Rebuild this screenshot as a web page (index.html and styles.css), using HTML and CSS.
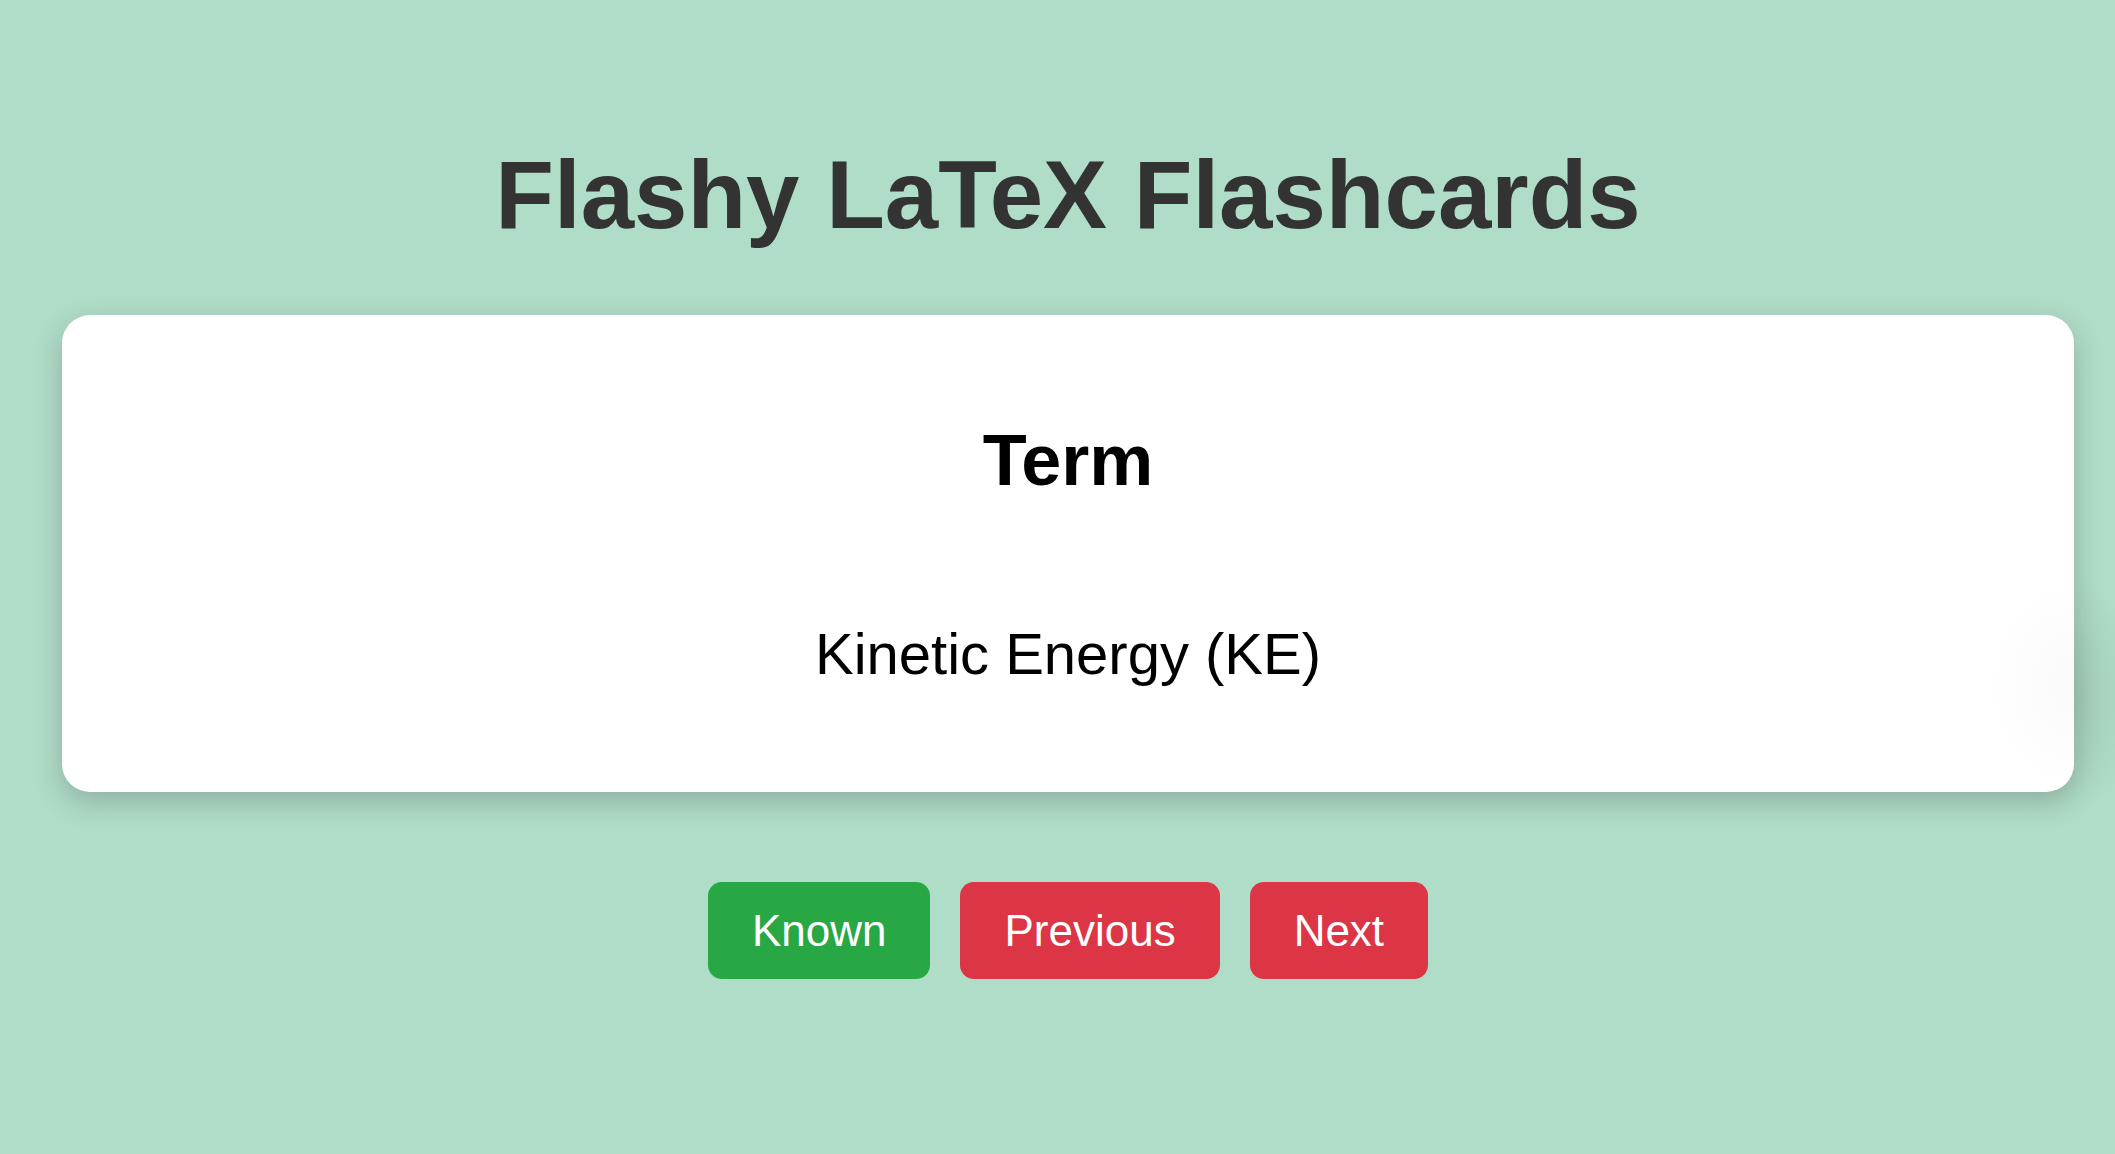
FILE: index.html
```html
<!DOCTYPE html>
<html lang="en">
<head>
<meta charset="utf-8">
<title>Flashy LaTeX Flashcards</title>
<link rel="stylesheet" href="styles.css">
</head>
<body>
<div class="page">
  <h1 class="title">Flashy LaTeX Flashcards</h1>
  <div class="card">
    <h2 class="label">Term</h2>
    <p class="content">Kinetic Energy (KE)</p>
  </div>
  <div class="controls">
    <button class="btn btn-known">Known</button>
    <button class="btn btn-nav">Previous</button>
    <button class="btn btn-nav">Next</button>
  </div>
</div>
</body>
</html>
```

FILE: styles.css
```css
html, body {
  margin: 0;
  padding: 0;
}
body {
  background: #b0ddc7;
  font-family: "Liberation Sans", Arial, sans-serif;
}
.page {
  margin-left: 62px;
  width: 2012px;
  padding-top: 140px;
}
.title {
  margin: 0;
  font-size: 96px;
  font-weight: 700;
  line-height: 110px;
  color: #333333;
  text-align: center;
}
.card {
  position: relative;
  box-sizing: border-box;
  margin-top: 65px;
  height: 477px;
  padding-top: 104px;
  background: #ffffff;
  border-radius: 28px;
  box-shadow: 0 10px 30px rgba(0, 0, 0, 0.2);
  text-align: center;
  color: #000000;
}
.card::before {
  content: "";
  position: absolute;
  z-index: -1;
  right: -70px;
  top: 260px;
  width: 160px;
  height: 240px;
  border-radius: 50%;
  background: radial-gradient(closest-side, rgba(0, 0, 0, 0.09), rgba(0, 0, 0, 0));
}
.card::after {
  content: "";
  position: absolute;
  right: 0;
  top: 260px;
  width: 90px;
  height: 220px;
  background: radial-gradient(ellipse 90px 110px at 100% 50%, rgba(0, 0, 0, 0.02), rgba(0, 0, 0, 0));
  pointer-events: none;
}
.label {
  margin: 0;
  font-size: 72px;
  font-weight: 700;
  line-height: 83px;
}
.content {
  margin: 118px 0 0;
  font-size: 58px;
  line-height: 67px;
}
.controls {
  display: flex;
  justify-content: center;
  gap: 30px;
  margin-top: 90px;
}
.btn {
  height: 97px;
  padding: 0 44px;
  border: 0;
  border-radius: 14px;
  font-family: "Liberation Sans", Arial, sans-serif;
  font-size: 44px;
  line-height: 50px;
  color: #ffffff;
  cursor: pointer;
}
.btn-known {
  background: #28a745;
}
.btn-nav {
  background: #dc3545;
}
```
